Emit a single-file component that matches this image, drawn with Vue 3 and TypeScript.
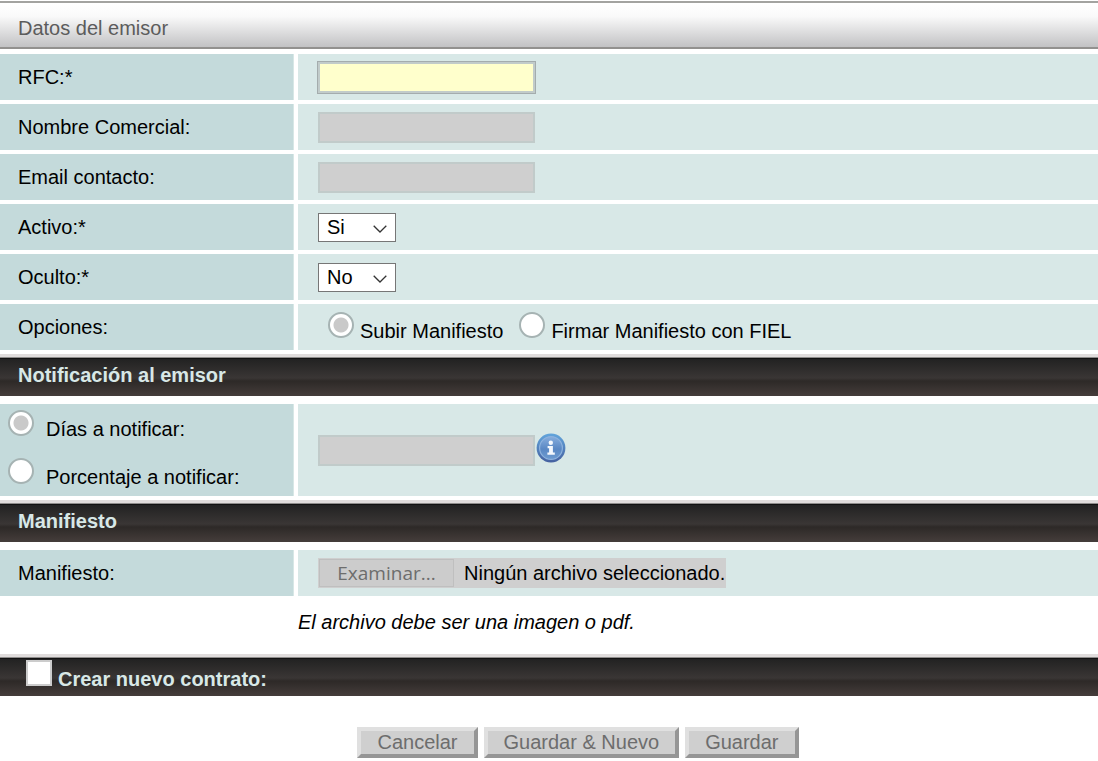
<script setup lang="ts">
import { onMounted, reactive, ref } from 'vue'

interface SelectField {
  id: 'activo' | 'oculto'
  label: string
}

const selects: SelectField[] = [
  { id: 'activo', label: 'Activo:*' },
  { id: 'oculto', label: 'Oculto:*' },
]

const form = reactive({
  rfc: '',
  nombre: '',
  email: '',
  activo: 'Si',
  oculto: 'No',
  opcion: 'subir',
  notificar: 'dias',
  valor: '',
  contrato: false,
})

const rfcInput = ref<HTMLInputElement | null>(null)

onMounted(() => rfcInput.value?.focus())
</script>

<template>
  <form class="page" @submit.prevent>
    <h1 class="title">Datos del emisor</h1>

    <div class="rows">
      <div class="row">
        <label class="name" for="rfc">RFC:*</label>
        <div class="value">
          <input id="rfc" ref="rfcInput" v-model="form.rfc" class="text required" type="text" />
        </div>
      </div>
      <div class="row">
        <label class="name" for="nombre">Nombre Comercial:</label>
        <div class="value">
          <input id="nombre" v-model="form.nombre" class="text" type="text" disabled />
        </div>
      </div>
      <div class="row">
        <label class="name" for="email">Email contacto:</label>
        <div class="value">
          <input id="email" v-model="form.email" class="text" type="email" disabled />
        </div>
      </div>
      <div v-for="field in selects" :key="field.id" class="row">
        <label class="name" :for="field.id">{{ field.label }}</label>
        <div class="value">
          <div class="select">
            <select :id="field.id" v-model="form[field.id]">
              <option>Si</option>
              <option>No</option>
            </select>
            <svg class="chevron" viewBox="0 0 14 8" aria-hidden="true">
              <path d="M0.7 0.8L7 7L13.3 0.8" fill="none" stroke="#333" stroke-width="1.3" />
            </svg>
          </div>
        </div>
      </div>
      <div class="row" role="radiogroup" aria-labelledby="opciones">
        <span id="opciones" class="name">Opciones:</span>
        <div class="value options">
          <label class="choice">
            <input v-model="form.opcion" type="radio" name="opcion" value="subir" />
            Subir Manifiesto
          </label>
          <label class="choice">
            <input v-model="form.opcion" type="radio" name="opcion" value="firmar" />
            Firmar Manifiesto con FIEL
          </label>
        </div>
      </div>
    </div>

    <h2 class="band">Notificación al emisor</h2>

    <div class="rows spaced">
      <div class="row">
        <div class="name notify">
          <label class="choice wide">
            <input v-model="form.notificar" type="radio" name="notificar" value="dias" />
            Días a notificar:
          </label>
          <label class="choice wide">
            <input v-model="form.notificar" type="radio" name="notificar" value="porcentaje" />
            Porcentaje a notificar:
          </label>
        </div>
        <div class="value">
          <input v-model="form.valor" class="text" type="text" aria-label="Valor a notificar" disabled />
          <svg class="info" viewBox="0 0 30 30" aria-hidden="true">
            <defs>
              <linearGradient id="rim" x1="0" y1="0" x2="0" y2="1">
                <stop offset="0" stop-color="#62a5dc" />
                <stop offset="1" stop-color="#4561a0" />
              </linearGradient>
              <linearGradient id="face" x1="0" y1="0" x2="0" y2="1">
                <stop offset="0" stop-color="#86addd" />
                <stop offset="0.55" stop-color="#5a88c4" />
                <stop offset="1" stop-color="#6d9bd0" />
              </linearGradient>
            </defs>
            <circle cx="15" cy="15" r="14.4" fill="url(#rim)" />
            <circle cx="15" cy="15" r="11.4" fill="url(#face)" stroke="#8db2de" stroke-width="1.2" />
            <circle cx="14.8" cy="9.8" r="2.2" fill="#f4f8fd" />
            <path d="M11.6 13H16.9V19.4H18.8V21.8H11.4V19.4H13.1V15.2H11.6Z" fill="#f4f8fd" />
          </svg>
        </div>
      </div>
    </div>

    <h2 class="band">Manifiesto</h2>

    <div class="rows spaced">
      <div class="row">
        <label class="name" for="manifiesto">Manifiesto:</label>
        <div class="value">
          <div class="file">
            <button id="manifiesto" class="browse" type="button" disabled>Examinar...</button>
            <span>Ningún archivo seleccionado.</span>
          </div>
        </div>
      </div>
    </div>
    <p class="note">El archivo debe ser una imagen o pdf.</p>

    <h2 class="band check">
      <label class="choice">
        <input v-model="form.contrato" type="checkbox" />
        Crear nuevo contrato:
      </label>
    </h2>

    <div class="actions">
      <button type="button" disabled>Cancelar</button>
      <button type="submit" disabled>Guardar &amp; Nuevo</button>
      <button type="submit" disabled>Guardar</button>
    </div>
  </form>
</template>

<style>
body {
  margin: 0;
  background: #fff;
}
</style>

<style scoped>
.page,
.page * {
  box-sizing: border-box;
}

.page {
  padding-top: 1px;
  font-family: "Liberation Sans", Arial, sans-serif;
  font-size: 20px;
  line-height: 24px;
  color: #000;
}

.title {
  margin: 0 0 5px;
  height: 48px;
  padding: 13px 18px 0;
  border-top: 2px solid #a3a3a0;
  border-bottom: 2px solid #92918f;
  background: linear-gradient(#fff, #fafafa 30%, #c2c2c4);
  font-size: 20px;
  font-weight: 400;
  color: #5c5c5c;
}

.rows {
  display: grid;
  gap: 4px;
  margin-bottom: 4px;
}

.rows.spaced {
  margin-top: 8px;
}

.row {
  display: grid;
  grid-template-columns: 294px 1fr;
  gap: 4px;
  min-height: 46px;
}

.name {
  display: flex;
  align-items: center;
  padding-left: 18px;
  border-right: 1px solid #d7e7e6;
  background: #c4dadb;
}

.value {
  display: flex;
  align-items: center;
  gap: 1px;
  padding-left: 20px;
  background: #d8e8e7;
}

.text {
  width: 217px;
  height: 31px;
  margin: 0;
  padding: 2px 4px;
  border: 2px solid #c1cbca;
  border-radius: 0;
  background: #cfcfcf;
  font: inherit;
  outline: none;
}

.text.required {
  background: #ffffcc;
  caret-color: transparent;
}

.text:focus {
  outline: 1px solid #a4acad;
}

.select {
  position: relative;
  width: 78px;
  height: 29px;
}

select {
  width: 100%;
  height: 100%;
  padding: 0 8px;
  border: 1px solid #767676;
  border-radius: 0;
  background: #fff;
  color: #000;
  font: inherit;
  appearance: none;
}

.chevron {
  position: absolute;
  top: 12px;
  right: 9px;
  width: 14px;
  height: 8px;
  pointer-events: none;
}

.options {
  align-items: flex-start;
  gap: 16px;
  padding: 8px 0 0 30px;
}

.choice {
  display: flex;
  align-items: baseline;
  gap: 6px;
}

.choice.wide {
  gap: 12px;
}

.choice input {
  flex: none;
  display: grid;
  place-items: center;
  width: 26px;
  height: 26px;
  margin: 0;
  background: #fff;
  appearance: none;
}

input[type="radio"] {
  border: 2px solid #a6b3b3;
  border-radius: 50%;
}

input[type="radio"]:checked {
  background: radial-gradient(circle, #c9c9c9 7px, #fff 8px);
}

input[type="checkbox"] {
  border: 2px solid #ccc;
}

input[type="checkbox"]:checked {
  background: #888;
  box-shadow: inset 0 0 0 4px #fff;
}

.notify {
  flex-direction: column;
  align-items: flex-start;
  gap: 17px;
  height: 92px;
  padding: 6px 0 0 8px;
}

.info {
  width: 30px;
  height: 30px;
  margin-bottom: 4px;
}

.band {
  height: 42px;
  margin: 0;
  padding: 9px 18px;
  background: linear-gradient(
    #e0dcdc 0 3px,
    #8e8c8b 3px 4px,
    #121212 4px 5px,
    #222 5px,
    #3a3635 24px,
    #2d2927 27px,
    #453d3b 42px
  );
  font-size: 20px;
  font-weight: 700;
  color: #d8e8e7;
}

.band.check {
  padding: 6px 26px 0;
}

.file {
  display: flex;
  align-items: center;
  height: 30px;
  padding: 1px;
  background: #cfcfcf;
}

.browse {
  width: 135px;
  height: 28px;
  margin-right: 10px;
  padding: 0;
  border: 1px solid #bfbfbf;
  background: #ccc;
  color: #6d6d6d;
  font: 19px/24px "Open Sans", "Noto Sans", sans-serif;
}

.note {
  margin: 0;
  padding: 10px 0 20px 298px;
  font-style: italic;
}

.actions {
  display: flex;
  justify-content: center;
  gap: 6px;
  padding: 31px 0 3px 58px;
}

.actions button {
  padding: 0 16px;
  border: 4px solid;
  border-color: #e0e0e0 #969696 #969696 #e0e0e0;
  background: #cfcfcf;
  color: #6d6d6d;
  font: inherit;
  line-height: 23px;
}
</style>
